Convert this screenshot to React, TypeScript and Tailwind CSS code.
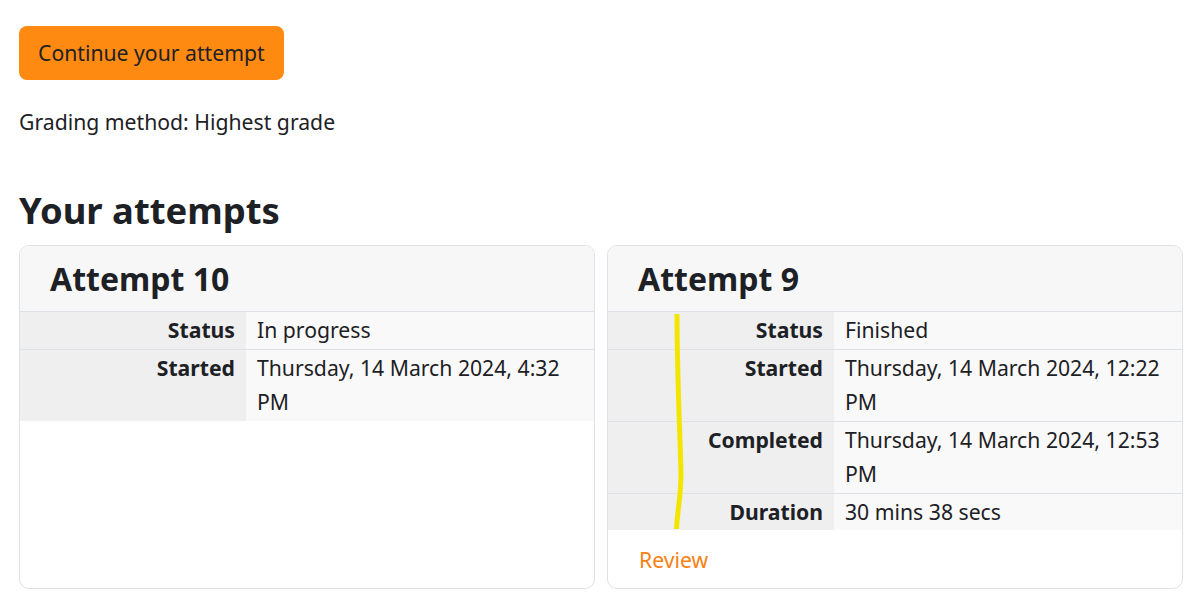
import React from "react";

const font = { fontFamily: '"Noto Sans", "Open Sans", sans-serif' };

function Row({ label, children }: { label: string; children: React.ReactNode }) {
  return (
    <div className="flex border-t border-[#dee2e6]">
      <div className="w-[226px] shrink-0 bg-[#efefef] py-[1px] pr-[11px] text-right font-bold leading-[34.5px]">
        {label}
      </div>
      <div className="flex-1 bg-[#f9f9f9] py-[1px] pl-[11px] pr-[12px] leading-[34.5px]">{children}</div>
    </div>
  );
}

export default function App() {
  return (
    <div className="min-h-[598px] bg-white px-[19px] pt-[26px] text-[#1d2125]" style={font}>
      <button className="rounded-[8px] bg-[#ff8a12] px-[19px] py-[10px] text-[21.2px] leading-[33px] text-[#1d2125]">
        <span className="block pb-[1px]">Continue your attempt</span>
      </button>
      <p className="mt-[26px] text-[21.2px] leading-[32px]">Grading method: Highest grade</p>
      <h2 className="mt-[50px] text-[36.4px] font-bold leading-[45px]">Your attempts</h2>
      <div className="mt-[12px] grid w-[1164px] grid-cols-2 gap-[12px] text-[21.2px]">
        <div className="overflow-hidden rounded-[10px] border border-[#dee2e6] bg-white">
          <div className="bg-[#f7f7f7] pl-[30px] pt-[14px] pb-[13px] text-[32px] font-bold leading-[38px]">
            Attempt 10
          </div>
          <Row label="Status">In progress</Row>
          <Row label="Started">
            Thursday, 14 March 2024, 4:32
            <br />
            PM
          </Row>
        </div>
        <div className="relative overflow-hidden rounded-[10px] border border-[#dee2e6] bg-white">
          <div className="bg-[#f7f7f7] pl-[30px] pt-[14px] pb-[13px] text-[32px] font-bold leading-[38px]">
            Attempt 9
          </div>
          <Row label="Status">Finished</Row>
          <Row label="Started">
            Thursday, 14 March 2024, 12:22
            <br />
            PM
          </Row>
          <Row label="Completed">
            Thursday, 14 March 2024, 12:53
            <br />
            PM
          </Row>
          <Row label="Duration">30 mins 38 secs</Row>
          <div className="px-[31px] pt-[14px] pb-[12px] leading-[32px] text-[#f98012]">Review</div>
          <svg className="pointer-events-none absolute left-[60px] top-[67px]" width="20" height="220" viewBox="0 0 20 220">
            <path d="M9 1 C9 60 12 120 13 160 C13 185 9 200 8.5 216" stroke="#f2e600" strokeWidth="5" fill="none" strokeLinecap="butt" />
          </svg>
        </div>
      </div>
    </div>
  );
}
